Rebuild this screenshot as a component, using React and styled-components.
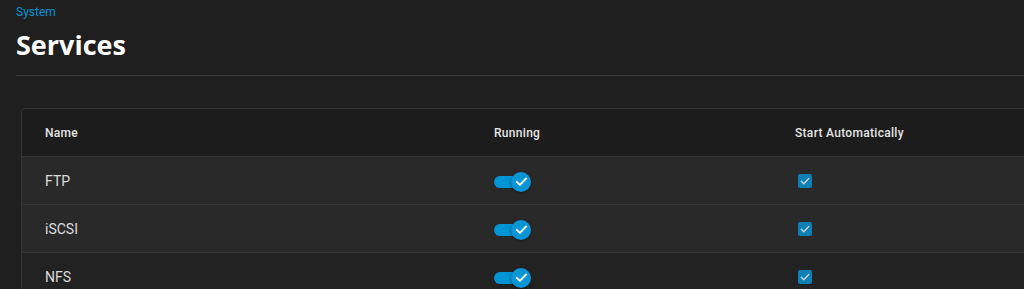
import React from 'react';
import styled, { createGlobalStyle } from 'styled-components';

const GlobalStyle = createGlobalStyle`
  html, body {
    margin: 0;
    padding: 0;
    background: #1f1f1f;
    overflow: hidden;
  }
  body {
    font-family: Roboto, "Liberation Sans", sans-serif;
    color: #e0e0e0;
  }
`;

const Page = styled.div`
  width: 1024px;
  height: 289px;
  background: #1f1f1f;
`;

const PageHeader = styled.header`
  padding: 4px 0 0 16px;
  display: flex;
  flex-direction: column;
`;

const Breadcrumb = styled.a`
  color: #0095d5;
  font-size: 12px;
  line-height: 16px;
  text-decoration: none;
`;

const Title = styled.h1`
  margin: 0;
  font-family: "Open Sans", "Noto Sans", sans-serif;
  font-weight: 700;
  font-size: 27px;
  line-height: 34px;
  padding: 8px 0 13px;
  color: #ffffff;
  border-bottom: 1px solid #3c3c3c;
`;

const Content = styled.main`
  padding: 32px 0 0 21px;
`;

/* the card continues past the right edge of the view, so no right border */
const Card = styled.section`
  border: 1px solid #353535;
  border-right: none;
  border-radius: 5px 0 0 0;
  overflow: hidden;
  background: #222222;
`;

const Row = styled.div`
  display: grid;
  grid-template-columns: 449px 301px 1fr;
  align-items: center;
  height: 47px;
  background: ${({ $bg }) => $bg};
  border-top: ${({ $first }) => ($first ? 'none' : '1px solid #343434')};
`;

const HeadCell = styled.div`
  padding-left: 23px;
  font-size: 12px;
  font-weight: 500;
  letter-spacing: 0.3px;
  color: #e4e4e4;
`;

const Cell = styled.div`
  padding-left: 23px;
  font-size: 14px;
  color: #dcdcdc;
  display: flex;
  align-items: center;
`;

const Toggle = styled.span`
  position: relative;
  display: inline-block;
  width: 34px;
  height: 12px;
  border-radius: 6px;
  background: #0095d5;
  margin-top: 2px;
`;

const Thumb = styled.span`
  position: absolute;
  right: -3px;
  top: 50%;
  width: 20px;
  height: 20px;
  margin-top: -10px;
  border-radius: 50%;
  background: #0a96d6;
  box-shadow: 0 1px 3px rgba(0, 0, 0, 0.55);
  display: flex;
  align-items: center;
  justify-content: center;
`;

const Checkbox = styled.span`
  width: 14px;
  height: 14px;
  margin-left: 3px;
  border-radius: 2px;
  background: #0f80b6;
  display: flex;
  align-items: center;
  justify-content: center;
`;

const Check = ({ size, color, width }) => (
  <svg width={size} height={size} viewBox="0 0 24 24" fill="none">
    <path d="M4.5 12.5l5 5L19.5 7" stroke={color} strokeWidth={width} strokeLinecap="round" strokeLinejoin="round" />
  </svg>
);

const services = [
  { name: 'FTP', bg: '#292929' },
  { name: 'iSCSI', bg: '#292929' },
  { name: 'NFS', bg: '#222222' },
];

export default function App() {
  return (
    <Page>
      <GlobalStyle />
      <PageHeader>
        <Breadcrumb href="#">System</Breadcrumb>
        <Title>Services</Title>
      </PageHeader>
      <Content>
        <Card>
          <Row $first $bg="#1c1c1c">
            <HeadCell>Name</HeadCell>
            <HeadCell>Running</HeadCell>
            <HeadCell>Start Automatically</HeadCell>
          </Row>
          {services.map((s) => (
            <Row key={s.name} $bg={s.bg}>
              <Cell>{s.name}</Cell>
              <Cell>
                <Toggle>
                  <Thumb>
                    <Check size={15} color="#ffffff" width={3} />
                  </Thumb>
                </Toggle>
              </Cell>
              <Cell>
                <Checkbox>
                  <Check size={12} color="#c8d6de" width={2.6} />
                </Checkbox>
              </Cell>
            </Row>
          ))}
        </Card>
      </Content>
    </Page>
  );
}
